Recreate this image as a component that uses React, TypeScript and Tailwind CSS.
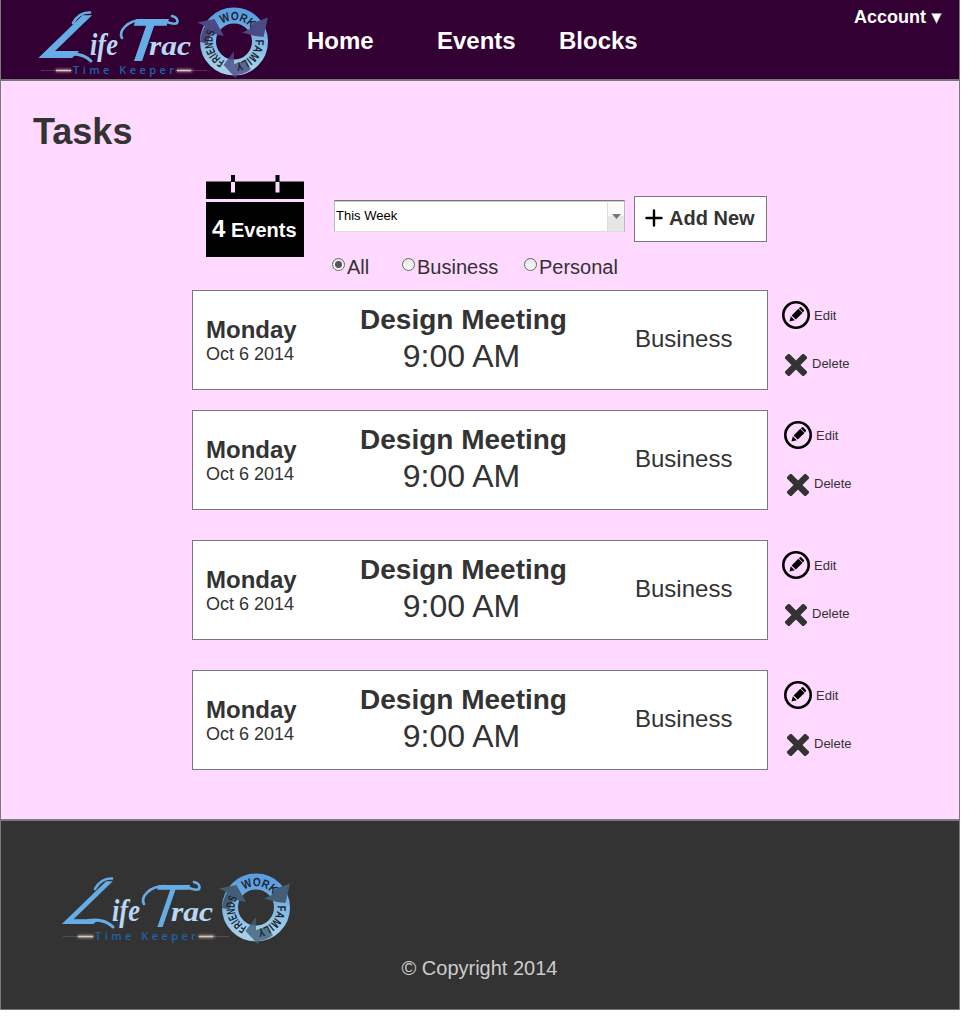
type LogoProps = { id: string; arrow: string; ringTop: string; ringBottom: string };

function Logo({ id, arrow, ringTop, ringBottom }: LogoProps) {
  const ring = `${id}-ring`;
  const orbit = `${id}-orbit`;
  return (
    <svg width="245" height="80" viewBox="0 0 245 80" className="block overflow-visible">
      <defs>
        <linearGradient id={ring} x1="0" y1="0" x2="0" y2="1">
          <stop offset="0" stopColor={ringTop} />
          <stop offset="1" stopColor={ringBottom} />
        </linearGradient>
        <path id={orbit} d="M204 62.8 A21.3 21.3 0 1 1 204.01 62.8 A21.3 21.3 0 1 1 204 62.8" />
      </defs>

      <g fill="#66ade6" fontFamily="'Liberation Sans', sans-serif">
        <text transform="translate(4 57.5) skewX(-46)" fontSize="62" textLength="40" lengthAdjust="spacingAndGlyphs">L</text>
        <text transform="translate(91 61) skewX(-19)" fontSize="61" textLength="34" lengthAdjust="spacingAndGlyphs">T</text>
      </g>
      <g fill="none" stroke="#66ade6" strokeLinecap="round" strokeWidth="2.600">
        <path d="M43 23Q49 12 60 12.500" />
        <path d="M36 54.500Q52 52 61 61" strokeWidth="3" />
        <path d="M112 20C98 20 88 31 92 38" />
        <path d="M135 21Q143 25 147 23Q149 18 142 16" />
      </g>
      <g fontFamily="'Liberation Serif', serif" fontStyle="italic" fontWeight="700" fill="#b9d6f4">
        <text x="60" y="55" fontSize="31" textLength="28" lengthAdjust="spacingAndGlyphs">ife</text>
        <text x="119" y="55" fontSize="27" textLength="42" lengthAdjust="spacingAndGlyphs">rac</text>
      </g>

      <path d="M11 70.500H42M146 70.500H177" stroke="#8b7480" strokeWidth="0.800" opacity="0.500" />
      <rect x="25" y="68.500" width="17" height="4" rx="2" className="blur-[1px]" fill="#e7c6b0" opacity="0.450" />
      <rect x="146" y="68.500" width="17" height="4" rx="2" className="blur-[1px]" fill="#e7c6b0" opacity="0.450" />
      <path d="M26 70.500H41M147 70.500H161" stroke="#d5ccc8" strokeWidth="1.600" />
      <text x="43" y="74" fontFamily="'Open Sans', sans-serif" fontWeight="600" fontSize="11" fill="#1a65a8" textLength="101">Time Keeper</text>

      <circle cx="204" cy="41.500" r="26" fill="none" stroke={`url(#${ring})`} strokeWidth="16" />
      <g fill={arrow}>
        <path d="M212 32.500L218 30Q222 27 222.500 23L238 17.500L233.500 37L225 36Z" />
        <path d="M167 22.500L184.500 19L194 36L182 33.500Q178 39 178 44L170 42Q171 33 175 26Z" />
        <path d="M204 51L193.500 65L206 78.500L206.500 75Q216 74 221 69L214 61L204 64Z" opacity="0.800" />
      </g>
      <g fontFamily="'Liberation Sans', sans-serif" fontWeight="700" fontSize="12" fill="#20262f">
        <text><textPath href={`#${orbit}`} startOffset="54" textLength="32" lengthAdjust="spacingAndGlyphs">WORK</textPath></text>
        <text><textPath href={`#${orbit}`} startOffset="98" textLength="34" lengthAdjust="spacingAndGlyphs">FAMILY</textPath></text>
        <text><textPath href={`#${orbit}`} startOffset="9.500" textLength="34" lengthAdjust="spacingAndGlyphs">FRIENDS</textPath></text>
      </g>
    </svg>
  );
}

function CalendarBadge() {
  return (
    <div className="grid h-[82px] w-[98px] shrink-0">
      <svg width="98" height="82" viewBox="0 0 98 82" className="col-start-1 row-start-1">
        <path d="M0 6.500H98V24H0ZM0 27H98V82H0Z" fill="#000" />
        <path d="M25 0H29V7H25ZM69.500 0H73.500V7H69.500Z" fill="#000" />
        <path d="M25 7H29V17.500H25ZM69.500 7H73.500V17.500H69.500Z" fill="#ffd9ff" />
      </svg>
      <div className="col-start-1 row-start-1 pt-[40px] pl-[6px] text-xl leading-7 font-bold whitespace-nowrap text-white">
        <span className="text-2xl leading-7">4</span> Events
      </div>
    </div>
  );
}

function EditIcon() {
  return (
    <svg width="28" height="28" viewBox="0 0 28 28">
      <circle cx="14" cy="14" r="12.700" fill="none" stroke="#000" strokeWidth="2.600" />
      <path d="M7.500 20.500L8.800 15.200L12.800 19.200ZM9.600 14.400L16.300 7.700L20.500 11.900L13.800 18.600ZM16.800 7.200L18 6.200Q18.700 5.700 19.300 6.300L21.900 8.900Q22.400 9.600 21.900 10.300L21 11.400Z" fill="#000" />
    </svg>
  );
}

function DeleteIcon() {
  return (
    <svg width="22" height="22" viewBox="0 0 22 22">
      <path d="M3.800 3.800L18.200 18.200M18.200 3.800L3.800 18.200" stroke="#333" strokeWidth="6.400" strokeLinecap="square" />
    </svg>
  );
}

function Radio({ label, checked = false }: { label: string; checked?: boolean }) {
  return (
    <label className="flex text-xl leading-7">
      <span className="mt-[5px] mr-[2px] grid size-[13px] place-items-center rounded-full border border-[#666] bg-linear-to-b from-[#e4e4e4] to-white">
        {checked && <span className="size-[7px] rounded-full bg-[#555]" />}
      </span>
      {label}
    </label>
  );
}

function TaskRow({ shifted }: { shifted: boolean }) {
  return (
    <li className="flex h-[100px]">
      <article className="flex w-[576px] border border-[#797979] bg-white pl-[13px]">
        <div className="w-[154px] pt-[27px]">
          <p className="text-2xl leading-6 font-bold">Monday</p>
          <p className="text-lg leading-6">Oct 6 2014</p>
        </div>
        <div className="w-[207px] pt-[13px] text-center">
          <h2 className="text-[28px] leading-8 font-bold whitespace-nowrap">Design Meeting</h2>
          <p className="pr-[4px] text-[32px] leading-10">9:00 AM</p>
        </div>
        <p className="pt-[32px] pl-[68px] text-2xl leading-8">Business</p>
      </article>
      <div className={shifted ? "pt-[11px] pl-4 text-[13px]" : "pt-[11px] pl-[14px] text-[13px]"}>
        <a className="flex h-7 gap-[4px] leading-[29px]"><EditIcon />Edit</a>
        <a className="mt-[25px] flex h-[22px] gap-[5px] pl-[3px] leading-[19px]"><DeleteIcon />Delete</a>
      </div>
    </li>
  );
}

export default function App() {
  return (
    <div className="flex h-[1010px] w-[960px] flex-col font-['Liberation_Sans',sans-serif] text-[#333]">
      <header className="flex h-20 border border-t-0 border-[#797979] bg-[#330033] font-bold text-white">
        <div className="w-[276px] pl-[29px]">
          <Logo id="head" arrow="#4c4a82" ringTop="#5c9ee2" ringBottom="#a3d0e8" />
        </div>
        <nav className="flex flex-1 pt-[25px] pl-[30px] text-2xl leading-8">
          <a className="w-[130px]">Home</a>
          <a className="w-[122px]">Events</a>
          <a>Blocks</a>
        </nav>
        <button className="flex h-[34px] items-center gap-[5px] pr-[17px] text-lg">
          Account
          <svg width="11" height="11" viewBox="0 0 11 11" className="mt-[3px]"><path d="M0.500 0.500H10.500L5.500 10.500Z" fill="#fff" stroke="#999" strokeWidth="0.600" /></svg>
        </button>
      </header>

      <main className="h-[740px] border border-[#797979] bg-[#ffd9ff]">
        <h1 className="pt-[31px] pl-8 text-4xl leading-10 font-bold">Tasks</h1>
        <section className="mt-[23px] flex pl-[205px]">
          <CalendarBadge />
          <div className="pt-[21px] pl-[28px]">
            <div className="flex pl-[2px]">
              <button className="mt-1 flex h-8 w-[291px] border border-[#bbb] border-t-[#777] border-b-[#ddd] bg-white text-[13px] text-black">
                <span className="h-full flex-1 border-t border-[#ccc] pl-px text-left leading-[28px]">This Week</span>
                <span className="grid h-full w-[17px] place-items-center border-t border-l border-[#ddd] border-t-[#ccc] bg-linear-to-b from-[#fafafa] from-50% to-[#e6e6e6] to-50%">
                  <svg width="9" height="5" viewBox="0 0 9 5"><path d="M0 0H9L4.500 5Z" fill="#777" /></svg>
                </span>
              </button>
              <button className="ml-[9px] flex h-[46px] w-[133px] items-center border border-[#797979] bg-white pb-[2px] pl-[10px] text-xl font-bold">
                <svg width="18" height="18" viewBox="0 0 18 18" className="mr-[6px]"><path d="M1.500 9H16.500M9 1.500V16.500" stroke="#000" strokeWidth="2.400" strokeLinecap="round" /></svg>
                Add New
              </button>
            </div>
            <div className="mt-[11px] flex h-7">
              <div className="w-[70px]"><Radio label="All" checked /></div>
              <div className="w-[122px]"><Radio label="Business" /></div>
              <Radio label="Personal" />
            </div>
          </div>
        </section>
        <ul className="mt-[9px] flex flex-col pl-[191px]">
          <TaskRow shifted={false} />
          <li className="h-5" />
          <TaskRow shifted />
          <li className="h-[30px]" />
          <TaskRow shifted={false} />
          <li className="h-[30px]" />
          <TaskRow shifted />
        </ul>
      </main>

      <footer className="h-[190px] border border-[#797979] bg-[#333] text-[#ccc]">
        <div className="pt-[45px] pl-[51px]">
          <Logo id="foot" arrow="#435f78" ringTop="#5c9ee2" ringBottom="#a3d0e8" />
        </div>
        <p className="mt-[8px] pr-[1px] text-center text-xl leading-7">© Copyright 2014</p>
      </footer>
    </div>
  );
}
